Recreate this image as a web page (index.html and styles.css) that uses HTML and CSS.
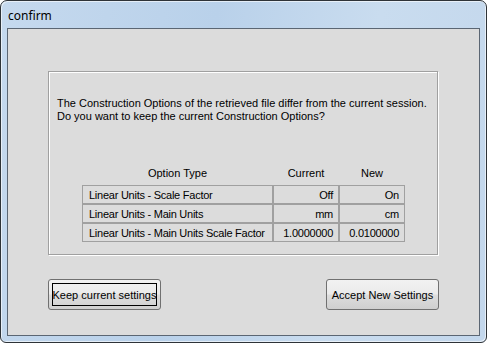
FILE: index.html
```html
<!DOCTYPE html>
<html>
<head>
<meta charset="utf-8">
<link rel="stylesheet" href="styles.css">
</head>
<body>
<div class="window">
  <div class="titlebar"><span class="title">confirm</span></div>
  <div class="client">
    <div class="frame">
      <p class="message">The Construction Options of the retrieved file differ from the current session.<br>Do you want to keep the current Construction Options?</p>
      <table class="options">
        <thead>
          <tr><th class="c-type">Option Type</th><th class="c-val">Current</th><th class="c-val">New</th></tr>
        </thead>
        <tbody>
          <tr><td class="c-type">Linear Units - Scale Factor</td><td class="c-val">Off</td><td class="c-val">On</td></tr>
          <tr><td class="c-type">Linear Units - Main Units</td><td class="c-val">mm</td><td class="c-val">cm</td></tr>
          <tr><td class="c-type">Linear Units - Main Units Scale Factor</td><td class="c-val">1.0000000</td><td class="c-val">0.0100000</td></tr>
        </tbody>
      </table>
    </div>
    <div class="buttons">
      <button class="btn btn-focus">Keep current settings</button>
      <button class="btn btn-accept">Accept New Settings</button>
    </div>
  </div>
</div>
</body>
</html>
```

FILE: styles.css
```css
html, body {
  margin: 0;
  padding: 0;
  background: #ffffff;
}
.window {
  box-sizing: border-box;
  width: 487px;
  height: 343px;
  border: 1px solid #2e3338;
  border-radius: 7px 7px 6px 6px;
  background: linear-gradient(100deg, #c5d9ee 0%, #b9d1ea 40%, #c9dcef 70%, #c3d7ec 100%);
  padding: 0 6px 6px;
  display: flex;
  flex-direction: column;
  box-shadow: inset 1px 1px 0 rgba(255,255,255,0.6), inset -1px -1px 0 rgba(255,255,255,0.6);
}
.titlebar {
  height: 27px;
  display: flex;
  align-items: center;
  padding-left: 1px;
  padding-top: 1px;
  box-sizing: border-box;
}
.title {
  font-family: "Noto Sans", "Open Sans", sans-serif;
  font-size: 12px;
  color: #000;
}
.client {
  flex: 1;
  border: 1px solid #5b6673;
  background: #dcdcdc;
  display: flex;
  flex-direction: column;
  padding: 42px 41px 0 40px;
  font-family: "Liberation Sans", Arial, sans-serif;
  font-size: 11px;
  color: #000;
}
.frame {
  box-sizing: border-box;
  height: 184px;
  border: 1px solid #a0a0a0;
  box-shadow: inset 1px 1px 0 #ffffff, 1px 1px 0 #ffffff;
  padding: 25px 8px 0;
}
.message {
  margin: 0;
  line-height: 13px;
}
.options {
  margin: 39px 0 0 25px;
  border-collapse: separate;
  border-spacing: 0;
}
.options th {
  font-weight: normal;
  text-align: center;
  height: 22px;
  padding: 0 0 1px;
}
.options td {
  border: 1px solid #a0a0a0;
  height: 17px;
  padding: 0 5px 0 6px;
  white-space: nowrap;
  letter-spacing: -0.25px;
}
.options td.c-type {
  width: 178px;
  text-align: left;
}
.options td.c-val {
  width: 53px;
  text-align: right;
}
.buttons {
  display: flex;
  justify-content: space-between;
  margin-top: 24px;
}
.btn {
  box-sizing: border-box;
  width: 113px;
  height: 31px;
  border: 1px solid #707070;
  border-radius: 3px;
  background: linear-gradient(#f2f2f2 0%, #ebebeb 48%, #dddddd 52%, #cfcfcf 100%);
  font-family: "Liberation Sans", Arial, sans-serif;
  font-size: 11px;
  color: #000;
  padding: 0;
}
.btn-accept {
  margin-right: -1px;
}
.btn-focus {
  outline: 1px solid #000;
  outline-offset: -5px;
}
```
